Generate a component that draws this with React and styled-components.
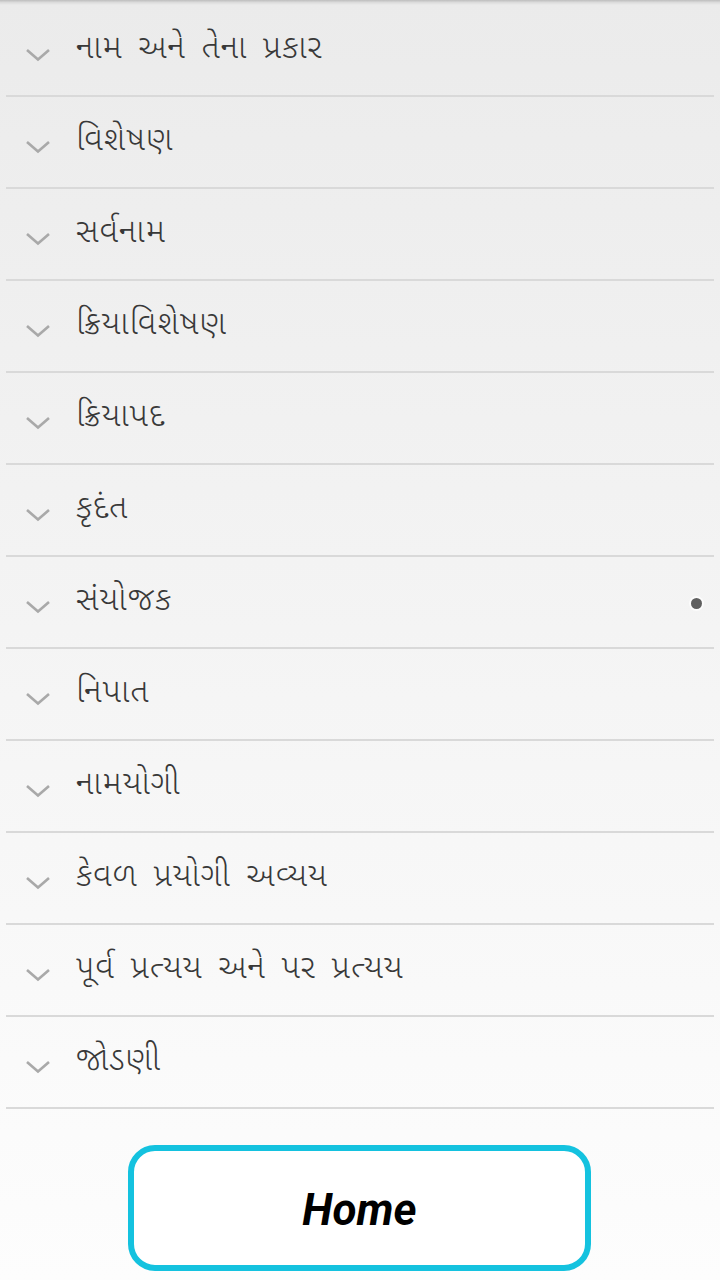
import React from "react";
import styled, { createGlobalStyle } from "styled-components";

const GlobalStyle = createGlobalStyle`
  html, body {
    margin: 0;
    padding: 0;
  }
  body {
    font-family: "Noto Sans Gujarati", "Noto Sans", "DejaVu Sans", sans-serif;
  }
`;

const Screen = styled.div`
  position: relative;
  width: 720px;
  height: 1280px;
  overflow: hidden;
  background: linear-gradient(to bottom, #ebebeb 0%, #f6f6f6 60%, #fdfdfd 100%);
`;

const TopShadow = styled.div`
  height: 5px;
  background: linear-gradient(to bottom, #bdbdbd 0%, #dcdcdc 50%, #ebebeb 100%);
`;

const List = styled.ul`
  list-style: none;
  margin: 0;
  padding: 0 6px;
`;

const Row = styled.li`
  display: flex;
  align-items: center;
  height: 90px;
  border-bottom: 2px solid #d9d9d9;
`;

const Chevron = styled.svg`
  width: 26px;
  height: 14px;
  margin-left: 19px;
  margin-top: 10px;
  flex-shrink: 0;
`;

const Label = styled.span`
  margin-left: 25px;
  font-size: 33px;
  font-weight: 300;
  letter-spacing: 1px;
  word-spacing: 6px;
  color: #383838;
  line-height: 1;
  margin-bottom: 2px;
`;

const Footer = styled.div`
  display: flex;
  justify-content: center;
  padding-top: 36px;
  padding-right: 1px;
`;

const HomeButton = styled.button`
  width: 463px;
  height: 126px;
  box-sizing: border-box;
  border: 6px solid #14c2df;
  border-radius: 27px;
  background: #ffffff;
  font-family: Roboto, "Liberation Sans", sans-serif;
  font-style: italic;
  font-weight: 700;
  font-size: 44px;
  color: #000000;
  padding: 4px 0 0;
`;

const TouchDot = styled.div`
  position: absolute;
  left: 691px;
  top: 598px;
  width: 11px;
  height: 11px;
  border-radius: 50%;
  background: #5f5f5f;
  box-shadow: 0 0 0 2px rgba(255, 255, 255, 0.7);
`;

const items = [
  "નામ અને તેના પ્રકાર",
  "વિશેષણ",
  "સર્વનામ",
  "ક્રિયાવિશેષણ",
  "ક્રિયાપદ",
  "કૃદંત",
  "સંયોજક",
  "નિપાત",
  "નામયોગી",
  "કેવળ પ્રયોગી અવ્યય",
  "પૂર્વ પ્રત્યય અને પર પ્રત્યય",
  "જોડણી",
];

function App() {
  return (
    <>
      <GlobalStyle />
      <Screen>
        <TopShadow />
        <List>
          {items.map((item) => (
            <Row key={item}>
              <Chevron viewBox="0 0 26 14">
                <path d="M2 2 L13 11.5 L24 2" fill="none" stroke="#a9a9a9" strokeWidth="2.6" />
              </Chevron>
              <Label>{item}</Label>
            </Row>
          ))}
        </List>
        <Footer>
          <HomeButton>Home</HomeButton>
        </Footer>
        <TouchDot />
      </Screen>
    </>
  );
}

export default App;
